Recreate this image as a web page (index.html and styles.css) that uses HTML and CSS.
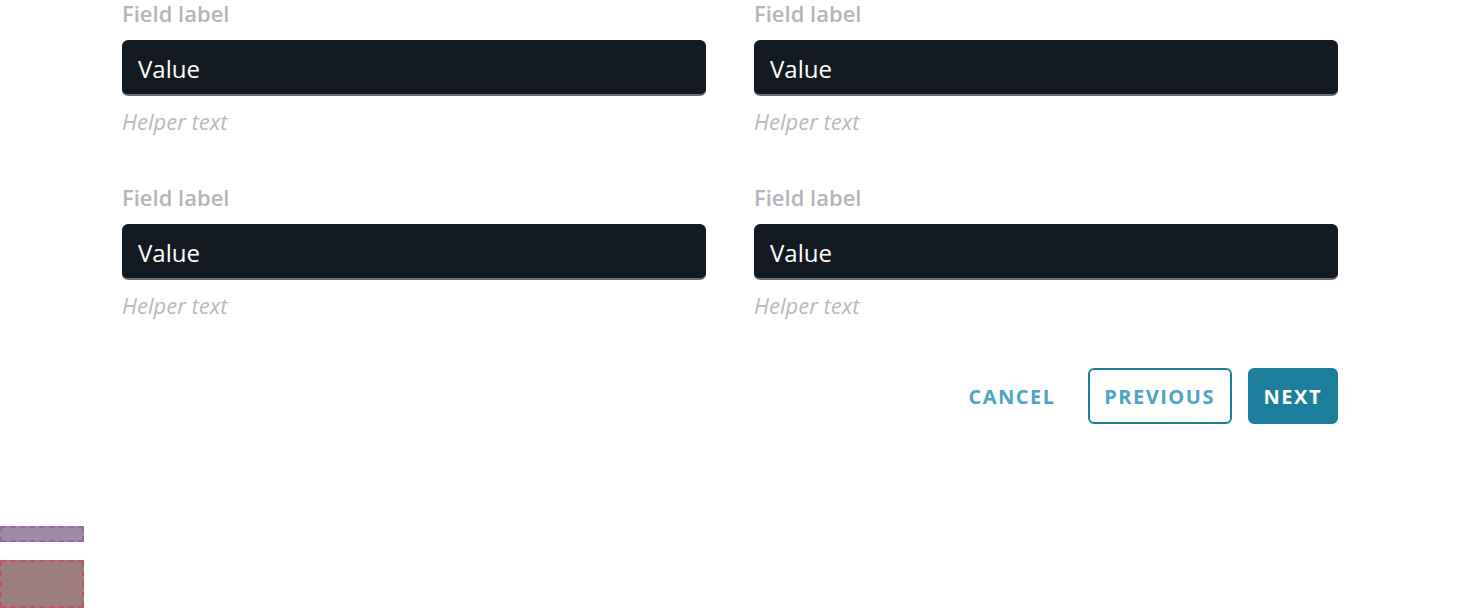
FILE: index.html
```html
<!DOCTYPE html>
<html>
<head>
<meta charset="utf-8">
<link rel="stylesheet" href="styles.css">
</head>
<body>
<div class="page">
  <div class="form">
    <div class="grid">
      <div class="field">
        <div class="label">Field label</div>
        <div class="input">Value</div>
        <div class="helper">Helper text</div>
      </div>
      <div class="field">
        <div class="label">Field label</div>
        <div class="input">Value</div>
        <div class="helper">Helper text</div>
      </div>
      <div class="field">
        <div class="label">Field label</div>
        <div class="input">Value</div>
        <div class="helper">Helper text</div>
      </div>
      <div class="field">
        <div class="label">Field label</div>
        <div class="input">Value</div>
        <div class="helper">Helper text</div>
      </div>
    </div>
    <div class="actions">
      <button class="btn btn-text">CANCEL</button>
      <button class="btn btn-outline">PREVIOUS</button>
      <button class="btn btn-primary">NEXT</button>
    </div>
  </div>
  <div class="debug">
    <div class="dbg dbg-purple"></div>
    <div class="dbg dbg-red"></div>
  </div>
</div>
</body>
</html>
```

FILE: styles.css
```css
* { box-sizing: border-box; }
html, body { margin: 0; padding: 0; background: #fff; }
body { width: 1460px; height: 608px; overflow: hidden; font-family: "Open Sans", sans-serif; }
.page { display: flex; flex-direction: column; height: 608px; }
.form { padding: 0 122px; display: flex; flex-direction: column; }
.grid {
  display: grid;
  grid-template-columns: 584px 584px;
  column-gap: 48px;
  row-gap: 44px;
  margin-top: -3px;
}
.field { display: flex; flex-direction: column; }
.label {
  font-size: 22px;
  font-weight: 600;
  color: #b3b5b8;
  line-height: 32px;
  height: 32px;
}
.input {
  margin-top: 11px;
  height: 56px;
  background: #131a21;
  border-radius: 6px;
  border-bottom: 2px solid #6b7079;
  color: #fff;
  font-size: 24px;
  line-height: 58px;
  padding: 0 16px;
}
.helper {
  margin-top: 9px;
  font-size: 22px;
  font-style: italic;
  color: #b7b9bb;
  line-height: 32px;
  height: 32px;
}
.actions {
  display: flex;
  justify-content: flex-end;
  gap: 16px;
  margin-top: 47px;
}
.btn {
  height: 56px;
  padding: 0 14px;
  border-radius: 6px;
  font-family: "Open Sans", sans-serif;
  font-weight: 700;
  font-size: 20px;
  letter-spacing: 1.5px;
  background: none;
  border: 2px solid transparent;
  cursor: pointer;
}
.btn-text { color: #4da4c6; }
.btn-outline { color: #4da4c6; border-color: #1c7f9c; background: #fff; min-width: 144px; }
.btn-primary { color: #fff; background: #1c7f9c; border-color: #1c7f9c; }
.debug { margin-top: auto; display: flex; flex-direction: column; gap: 18px; }
.dbg { width: 84px; }
.dbg-purple { height: 16px; background: #9f8ba5; border: 2px dashed #9b6b9d; }
.dbg-red { height: 48px; background: #9e7f80; border: 2px dashed #c4555e; }
```
